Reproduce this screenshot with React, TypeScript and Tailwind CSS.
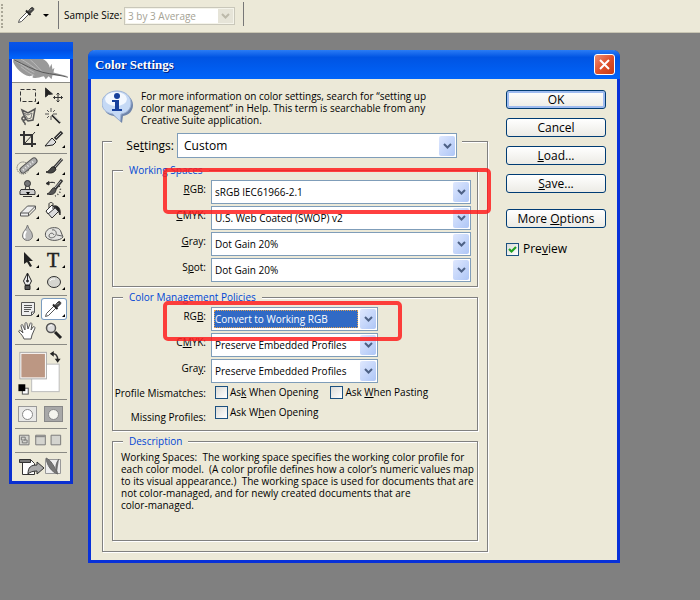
import { useState } from "react";
import type { ReactNode } from "react";

const helpText = `For more information on color settings, search for “setting up
color management” in Help. This term is searchable from any
Creative Suite application.`;

const descriptionText = `Working Spaces:\u00a0 The working space specifies the working color profile for
each color model.\u00a0 (A color profile defines how a color’s numeric values map
to its visual appearance.)\u00a0 The working space is used for documents that are
not color-managed, and for newly created documents that are
color-managed.`;

function Eyedropper() {
  return (
    <>
      <path d="M4.500 18.500l1-3 7.500-7.500 2 2-7.500 7.500z" fill="#fff" stroke="#555" />
      <path d="M12 6.500l4.500 4.500" stroke="#222" strokeWidth="2" />
      <path d="M14 7.500l3-3.500c1.500-1.500 3.500 .5 2.500 2L16 9.500z" fill="#444" stroke="#333" />
      <path d="M16 6.500l1.500-1.500" stroke="#bbb" />
    </>
  );
}

function Tool({ label, children, more = true, active = false }: { label: string; children: ReactNode; more?: boolean; active?: boolean }) {
  return (
    <button
      aria-label={label}
      className={
        active
          ? "h-[22px] w-[26px] rounded-[3px] bg-white shadow-[inset_0_0_0_1px_#7a9cc0]"
          : "h-[22px] w-[26px]"
      }
    >
      <svg viewBox="0 0 26 22" className="h-[22px] w-[26px]" fill="none" stroke="#333">
        {children}
        {more && <path d="M24 16v3h-3z" fill="#000" stroke="none" />}
      </svg>
    </button>
  );
}

function ToolSection({ children }: { children: ReactNode }) {
  return <div className="grid grid-cols-[26px_26px] border-b border-[#8a8a84] py-[2px]">{children}</div>;
}

function Palette() {
  return (
    <aside className="mt-[9px] w-16 shrink-0 self-start border-x-[3px] border-b-[3px] border-[#0a2fd0] bg-[#ece9d8]">
      <div className="-mx-[3px] h-[17px] bg-linear-to-b from-[#0a55e8] via-[#0050e6] to-[#0066ff]" />
      <svg viewBox="0 0 58 24" className="block h-6 w-full border-b border-[#8a8a84] bg-white">
        <path d="M0 0h31c4 2 7 6 7 9l2-4 1 6 2-2-1 5 15 4-16-1-1 4-3-3-3 3-2-3c-5 1-9 3-12 1l1-2-4 1C8 16 2 8 0 3z" fill="#999" />
        <path d="M0 1c9 4 15 10 22 13M8 0c6 3 12 8 18 12M18 1c4 3 7 7 12 12M8 8c5 4 9 7 14 9" stroke="#bbb" fill="none" />
        <path d="M1 1c11 5 19 10 30 13 10 2 18 3 26 5" stroke="#555" fill="none" />
      </svg>
      <div className="px-[3px]">
        <ToolSection>
          <Tool label="Marquee">
            <rect x="5.500" y="4.500" width="15" height="12" strokeDasharray="4 2" />
          </Tool>
          <Tool label="Move" more={false}>
            <path d="M4.500 3v9l3-2.500 4-.5z" fill="#222" />
            <path d="M17 8v9M12.500 12.500h9M15.500 9.500L17 8l1.500 1.500M15.500 15.500L17 17l1.500-1.500M14 11l-1.500 1.500L14 14M20 11l1.500 1.500L20 14" />
          </Tool>
          <Tool label="Lasso">
            <path d="M7 3l6 3 7-4-2 11-5 1-3-3zM10 10c-3-1-4 2-2 3s4-2 2-3M8 13c0 3 3 2 2 5" stroke="#555" strokeWidth="1.500" />
            <path d="M9 6l4 2 4-2-1 5-3 1z" stroke="#777" />
          </Tool>
          <Tool label="Magic wand" more={false}>
            <path d="M10 1v4M10 9v4M4 7h4M12 7h4M6 3l2 2M14 3l-2 2M6 11l2-2" stroke="#555" />
            <path d="M11 8l8 8" stroke="#222" strokeWidth="2" />
            <path d="M12 8l7 7" stroke="#aaa" />
          </Tool>
          <Tool label="Crop" more={false}>
            <path d="M9 2v13h12M5 6h12v12" strokeWidth="2" />
            <path d="M10 14L20 3" />
          </Tool>
          <Tool label="Slice">
            <path d="M21 3l-7 7" stroke="#333" strokeWidth="3.500" />
            <path d="M20 4l-5 5" stroke="#bbb" />
            <path d="M11 9l4 4-3 3c-3 0-5 1-8 1z" fill="#ddd" stroke="#222" />
          </Tool>
        </ToolSection>
        <ToolSection>
          <Tool label="Healing brush">
            <circle cx="8" cy="12" r="6" strokeDasharray="1 1" stroke="#555" />
            <path d="M8 14L19 5" stroke="#555" strokeWidth="7" strokeLinecap="round" />
            <path d="M8 14L19 5" stroke="#aaa" strokeWidth="5" strokeLinecap="round" />
            <path d="M8 14L19 5" stroke="#eee" strokeWidth="2" strokeDasharray="1 2" />
          </Tool>
          <Tool label="Brush">
            <path d="M21 3l-8 9" stroke="#333" strokeWidth="3" />
            <path d="M21 3l-7 8" stroke="#bbb" />
            <path d="M13 11c-4-1-3 4-8 5 4 2 9 1 10-3z" fill="#444" stroke="#222" />
          </Tool>
          <Tool label="Clone stamp">
            <circle cx="12.500" cy="5.500" r="3" fill="#777" />
            <path d="M11 8l-1 4M14 8l1 4" />
            <path d="M6 11.500h13l1 2v3H5v-3z" fill="#ccc" />
            <path d="M8 18.500h9" />
            <path d="M11 14h4l-2 3z" fill="#000" stroke="none" />
          </Tool>
          <Tool label="History brush">
            <path d="M21 2l-7 9" stroke="#333" strokeWidth="3" />
            <path d="M20 3l-6 7" stroke="#bbb" />
            <path d="M14 10c-4-1-3 4-8 6 4 1 8 1 9-4z" fill="#555" />
            <path d="M8 5c2-1 4-1 6 0M5 5.500l3-2v3.500z" fill="#222" />
            <path d="M18 8c3 4 1 8-4 10" strokeDasharray="1 2" strokeWidth="1.500" />
          </Tool>
          <Tool label="Eraser">
            <path d="M5.500 13l7-7h8l-7 7zM5.500 13v3h8v-3M13.500 16l7-7V6" fill="#eee" stroke="#555" />
          </Tool>
          <Tool label="Paint bucket">
            <path d="M5 11l6-6 7 6-7 7z" fill="#ddd" />
            <path d="M5 11l6-6 3 3-7 6z" fill="#fff" />
            <path d="M8 8V4c0-2 4-2 4 0v5" />
            <path d="M13 6c5-1 7 4 6 9-1-2-1-3-2-4z" fill="#222" />
          </Tool>
          <Tool label="Blur">
            <path d="M12.500 3c1 5 5 6 5 11a5 4.500 0 01-10 0c0-5 4-6 5-11z" fill="#bbb" stroke="#777" />
            <path d="M11 9c-2 3-2 5-1 7" stroke="#fff" strokeWidth="2" />
          </Tool>
          <Tool label="Sponge">
            <path d="M5 15c-2-4 1-8 5-9 5-1 9 0 10 4l2 5c-3 4-13 5-17 0z" fill="#e4e4e0" stroke="#555" />
            <path d="M11 8c3-1 5 2 4 5s-7 4-7 1 4-4 5-1M16 13l5 1" stroke="#666" />
          </Tool>
        </ToolSection>
        <ToolSection>
          <Tool label="Path selection">
            <path d="M9 3v12l3-2 3 5 2-1-3-5h4z" fill="#222" stroke="none" />
          </Tool>
          <Tool label="Type">
            <text x="6" y="18" fontSize="20" fontFamily="Liberation Serif, serif" fill="#222" stroke="#222" strokeWidth="0.500">T</text>
          </Tool>
          <Tool label="Pen">
            <path d="M12.500 2l4 8-2 4h-4l-2-4z" fill="#eee" stroke="#222" />
            <path d="M12.500 3v7" stroke="#222" />
            <circle cx="12.500" cy="10" r="1" fill="#222" />
            <path d="M10 14.500h5v4h-5z" fill="#555" stroke="#222" />
          </Tool>
          <Tool label="Ellipse">
            <ellipse cx="13" cy="11" rx="6.500" ry="5.500" fill="#d5d5d0" stroke="#333" />
            <path d="M9 10c1-2 3-2 5-2" stroke="#fff" />
          </Tool>
        </ToolSection>
        <ToolSection>
          <Tool label="Notes">
            <path d="M6.500 4.500h13v10l-3 3h-10z" fill="#eee" stroke="#555" />
            <path d="M9 7.500h8M9 9.500h8M9 11.500h7M9 13.500h5M16.500 17v-3h3" stroke="#555" />
          </Tool>
          <Tool label="Eyedropper" active>
            <Eyedropper />
          </Tool>
          <Tool label="Hand" more={false}>
            <path d="M9 19c-1-3-3-5-5-7-1-2 1-2 2-1l2 2-2-7c0-2 2-2 2 0l2 4V4c0-2 2-2 2 0l1 5 2-5c0-2 2-1 2 0l-1 6 2-3c1-1 2 0 2 1l-3 7-1 4z" fill="#fff" stroke="#555" />
          </Tool>
          <Tool label="Zoom" more={false}>
            <circle cx="10" cy="8" r="4.500" fill="#ddd" stroke="#555" strokeWidth="1.500" />
            <path d="M8 7c0-1 1-2 3-2" stroke="#fff" />
            <path d="M14 12l6 6" stroke="#222" strokeWidth="3" />
          </Tool>
        </ToolSection>
        <svg viewBox="0 0 52 55" className="block h-[55px] w-[52px] border-b border-[#8a8a84]" fill="none">
          <rect x="16.500" y="19.500" width="28" height="28" fill="#fff" stroke="#bcbcbc" />
          <rect x="4.500" y="7.500" width="27" height="27" fill="#fff" stroke="#aaa" />
          <rect x="6" y="9" width="24" height="24" fill="#bc9783" />
          <path d="M37 9c4-1 6 2 6 6" stroke="#333" strokeWidth="1.500" />
          <path d="M35 9l4-3v6zM40 14h6l-3 4z" fill="#222" />
          <rect x="7" y="44" width="6" height="6" fill="#fff" stroke="#555" />
          <path d="M3 40h7v7H3z" fill="#000" />
        </svg>
        <div className="flex items-center gap-[7px] border-b border-[#8a8a84] px-[3px] py-[6px]">
          <button aria-label="Standard mode" className="grid h-4 w-[19px] place-items-center border border-[#999] bg-[#e8e8e6]">
            <span className="size-[11px] rounded-full border border-[#888] bg-white" />
          </button>
          <button aria-label="Quick mask mode" className="grid h-4 w-[19px] place-items-center border border-[#888] bg-[#a8a8a8]">
            <span className="size-[11px] rounded-full border border-[#888] bg-[#f4f4ee]" />
          </button>
        </div>
        <svg viewBox="0 0 52 24" className="block h-6 w-[52px] border-b border-[#8a8a84]" fill="#d4d4cf" stroke="#777">
          <path d="M3.500 6.500h10v10h-10zM20.500 6.500h10v10h-10zM36.500 6.500h10v10h-10z" />
          <path d="M5.500 8.500h4v3h-4zM8.500 11.500h3v3h-5v-2M20 8h10" />
        </svg>
        <svg viewBox="0 0 52 28" className="block h-7 w-[52px]" stroke="#333">
          <path d="M7.500 6.500h8l4 4v11h-12z" fill="#fff" />
          <path d="M4.500 6.500h11v3h-11z" fill="#777" />
          <path d="M13 21c0-7 3-9 9-9V9l7 6-7 6v-3c-4 0-7 1-9 3z" fill="#aaa" />
          <path d="M30.500 6.500h15v14h-15z" fill="#eee" stroke="#999" />
          <path d="M31 5c5 2 8 8 12 16-7-2-11-9-12-16zM44 6c-3 4-4 8-2 13" fill="#777" stroke="#666" />
        </svg>
      </div>
    </aside>
  );
}

type ComboProps = { id: string; value: string; big?: boolean; focused?: boolean; className?: string };

function Combo({ id, value, big = false, focused = false, className = "" }: ComboProps) {
  return (
    <div className={`flex border border-[#7f9db9] bg-white p-px ${big ? "h-[25px]" : "h-6"} ${className}`}>
      <div className="grid min-w-0 flex-1 items-center">
        <select
          id={id}
          className={`col-start-1 row-start-1 appearance-none outline-none ${big ? "pl-[5px] text-[12px]" : "text-[10px]"} ${
            focused
              ? "ml-px h-[18px] w-[calc(100%-19px)] border border-dotted border-[#e0a050] bg-[#316ac5] text-white"
              : "h-full w-full"
          } ${!big && !focused ? "pl-[2px]" : ""}`}
        >
          <option>{value}</option>
        </select>
        <span className="pointer-events-none col-start-1 row-start-1 grid h-5 w-4 place-items-center justify-self-end rounded-[2px] bg-linear-to-br from-[#dfe8fe] to-[#aec6f6]">
          <svg viewBox="0 0 9 6" className="h-[6px] w-[9px]">
            <path d="M1 1l3.500 3.500L8 1" fill="none" stroke="#4d6185" strokeWidth="2" />
          </svg>
        </span>
      </div>
    </div>
  );
}

function Row({ id, label, children }: { id: string; label: ReactNode; children: ReactNode }) {
  return (
    <div className="grid grid-cols-[93px_1fr] gap-x-[5px]">
      <label htmlFor={id} className="text-right leading-[18px]">
        {label}
      </label>
      {children}
    </div>
  );
}

function Group({ title, children, className = "" }: { title: string; children: ReactNode; className?: string }) {
  return (
    <fieldset className="min-w-0 border border-[#808080] shadow-[1px_1px_0_#fff,inset_1px_1px_0_#fff]">
      <legend className="ml-[10px] bg-[#ece9d8] px-[6px] leading-3 text-[#0046d5]">{title}</legend>
      <div className={className}>{children}</div>
    </fieldset>
  );
}

function Check({ label, big = false, initial = false }: { label: ReactNode; big?: boolean; initial?: boolean }) {
  const [checked, setChecked] = useState(initial);
  return (
    <label className={`flex items-center ${big ? "gap-1 text-[12px] leading-4" : "gap-[2px] leading-[14px]"}`}>
      <span className="grid shrink-0">
        <input
          type="checkbox"
          checked={checked}
          onChange={() => setChecked(!checked)}
          className="col-start-1 row-start-1 size-[13px] appearance-none border border-[#1c5180] bg-linear-to-br from-[#dcdcd7] to-white"
        />
        {checked && (
          <svg viewBox="0 0 13 13" className="pointer-events-none col-start-1 row-start-1 size-[13px]">
            <path d="M3 6l2.500 2.500L10 4" fill="none" stroke="#21a121" strokeWidth="2.200" />
          </svg>
        )}
      </span>
      <span className="whitespace-nowrap">{label}</span>
    </label>
  );
}

const buttonClass =
  "h-[19px] rounded-[3px] border border-[#003c74] bg-linear-to-b from-white to-[#ecebe5] text-[12px] leading-4";

function ColorSettings() {
  return (
    <section className="mt-[17px] mr-20 ml-[15px] min-w-0 flex-1 self-start rounded-t-[7px] border-x-[3px] border-b-[3px] border-[#0831d9] bg-[#ece9d8]">
      <header className="-mx-[3px] flex h-[29px] items-center justify-between rounded-t-[7px] bg-linear-to-b from-[#2a7cf5] via-[#0054e3] via-25% to-[#0064fa] pr-[5px] pl-[7px]">
        <h1 className="font-['Liberation_Serif',serif] text-[13px] leading-4 font-bold text-white [text-shadow:1px_1px_0_#00207a]">
          Color Settings
        </h1>
        <button aria-label="Close" className="grid size-[21px] place-items-center rounded-[3px] border border-white bg-linear-to-br from-[#ee8d72] via-[#e0512c] to-[#c53a12]">
          <svg viewBox="0 0 13 13" className="size-[13px]">
            <path d="M2 2l9 9M11 2l-9 9" stroke="#fff" strokeWidth="2" />
          </svg>
        </button>
      </header>

      <div className="flex gap-[18px] px-[11px] pt-[11px] pb-2">
        <div className="min-w-0 flex-1">
          <div className="flex h-9 gap-[7px]">
            <svg viewBox="0 0 32 34" className="h-[34px] w-8 shrink-0">
              <path d="M17 3c8 0 14 5 14 12 0 6-4 10-10 11l-1 7-8-7C5 25 2 21 2 15 2 8 9 3 17 3z" fill="#6f85ab" />
              <path d="M15 1c8 0 14 5 14 12 0 6-4 10-10 11l-1 7-7-7C4 23 0 19 0 13 0 6 7 1 15 1z" fill="#c5d9f5" stroke="#9fb4d6" />
              <ellipse cx="14" cy="9" rx="11" ry="7" fill="#f3f8ff" />
              <circle cx="15" cy="6" r="3" fill="#17409c" />
              <path d="M10 10h7v9h3v2H10v-2h3v-7h-3z" fill="#17409c" />
            </svg>
            <p className="leading-3 whitespace-pre">{helpText}</p>
          </div>

          <fieldset className="mt-[7px] min-w-0 border border-[#808080] px-[9px] pb-[10px] shadow-[1px_1px_0_#fff,inset_1px_1px_0_#fff]">
            <legend className="flex h-4 w-[calc(100%-16px)] items-start bg-[#ece9d8]">
              <label htmlFor="settings" className="w-[65px] shrink-0 pr-[3px] text-right text-[12px] leading-[26px]">
                Se<u>t</u>tings:
              </label>
              <Combo id="settings" value="Custom" big className="flex-1" />
              <span className="w-[5px]" />
            </legend>

            <div className="flex flex-col gap-1 pt-[15px]">
              <div className="relative">
                <Group title="Working Spaces" className="flex flex-col gap-[2px] pt-1 pr-[6px] pb-1">
                  <Row id="ws-rgb" label={<><u>R</u>GB:</>}>
                    <Combo id="ws-rgb" value="sRGB IEC61966-2.1" />
                  </Row>
                  <Row id="ws-cmyk" label={<><u>C</u>MYK:</>}>
                    <Combo id="ws-cmyk" value="U.S. Web Coated (SWOP) v2" />
                  </Row>
                  <Row id="ws-gray" label={<><u>G</u>ray:</>}>
                    <Combo id="ws-gray" value="Dot Gain 20%" />
                  </Row>
                  <Row id="ws-spot" label={<>S<u>p</u>ot:</>}>
                    <Combo id="ws-spot" value="Dot Gain 20%" />
                  </Row>
                </Group>
                <div className="pointer-events-none absolute top-1 -right-[13px] left-[51px] h-[46px] rounded-[5px] border-4 border-[#ff1e1e]/85" />
              </div>

              <div className="relative">
                <Group title="Color Management Policies" className="flex flex-col gap-[2px] pt-1 pb-[5px]">
                  <Row id="p-rgb" label={<>RG<u>B</u>:</>}>
                    <Combo id="p-rgb" value="Convert to Working RGB" focused className="w-[167px]" />
                  </Row>
                  <Row id="p-cmyk" label={<>C<u>M</u>YK:</>}>
                    <Combo id="p-cmyk" value="Preserve Embedded Profiles" className="w-[167px]" />
                  </Row>
                  <Row id="p-gray" label={<>Gra<u>y</u>:</>}>
                    <Combo id="p-gray" value="Preserve Embedded Profiles" className="w-[167px]" />
                  </Row>
                  <div className="grid grid-cols-[93px_1fr] gap-x-[9px]">
                    <div className="flex flex-col gap-2 text-right leading-4 whitespace-nowrap">
                      <span>Profile Mismatches:</span>
                      <span>Missing Profiles:</span>
                    </div>
                    <div className="flex flex-col gap-[6px]">
                      <div className="flex gap-3">
                        <Check label={<>As<u>k</u> When Opening</>} />
                        <Check label={<>Ask <u>W</u>hen Pasting</>} />
                      </div>
                      <Check label={<>Ask W<u>h</u>en Opening</>} />
                    </div>
                  </div>
                </Group>
                <div className="pointer-events-none absolute top-[10px] left-[51px] h-10 w-[239px] rounded-[5px] border-4 border-[#ff1e1e]/85" />
              </div>

              <Group title="Description" className="px-2 pt-1 pb-[29px]">
                <p className="leading-3 whitespace-pre">{descriptionText}</p>
              </Group>
            </div>
          </fieldset>
        </div>

        <div className="flex w-[100px] shrink-0 flex-col gap-[9px]">
          <button className={`${buttonClass} shadow-[inset_0_0_0_2px_#9ebbf0]`}>OK</button>
          <button className={buttonClass}>Cancel</button>
          <button className={buttonClass}>
            <u>L</u>oad...
          </button>
          <button className={buttonClass}>
            <u>S</u>ave...
          </button>
          <button className={`${buttonClass} mt-[7px]`}>
            More <u>O</u>ptions
          </button>
          <div className="pt-[4px]">
            <Check label={<>Pre<u>v</u>iew</>} big initial />
          </div>
        </div>
      </div>
    </section>
  );
}

export default function App() {
  return (
    <div className="min-h-screen bg-[#808080] font-['Open_Sans',sans-serif] text-[10px] text-black">
      <div className="flex h-[33px] items-start border-b border-[#c9c6b4] bg-[#ece9d8]">
        <span className="mt-1 ml-px h-6 border-l-2 border-dotted border-[#aaa797]" />
        <svg viewBox="0 0 26 22" className="mt-1 ml-[11px] h-[22px] w-[26px]">
          <Eyedropper />
        </svg>
        <svg viewBox="0 0 6 3" className="mt-[14px] ml-[3px] h-[3px] w-[6px]">
          <path d="M0 0h6L3 3z" />
        </svg>
        <span className="mt-px ml-[9px] h-7 border-l border-[#777]" />
        <label htmlFor="sample" className="ml-[5px] w-[60px] leading-[31px] whitespace-nowrap">
          Sample Size:
        </label>
        <div className="mt-[7px] flex h-[18px] w-[111px] items-center border border-[#c9c7ba] bg-[#f5f4ea] p-px">
          <select id="sample" disabled className="h-full min-w-0 flex-1 appearance-none bg-white pl-[2px] text-[10px] text-[#a5a294]">
            <option>3 by 3 Average</option>
          </select>
          <span className="grid h-[14px] w-[15px] place-items-center bg-[#e6e4d8]">
            <svg viewBox="0 0 9 6" className="h-[6px] w-[9px]">
              <path d="M1 1l3.500 3.500L8 1" fill="none" stroke="#bcb9aa" strokeWidth="2" />
            </svg>
          </span>
        </div>
        <span className="mt-[2px] ml-2 h-6 border-l border-[#777]" />
      </div>

      <main className="flex pl-[9px]">
        <Palette />
        <ColorSettings />
      </main>
    </div>
  );
}
